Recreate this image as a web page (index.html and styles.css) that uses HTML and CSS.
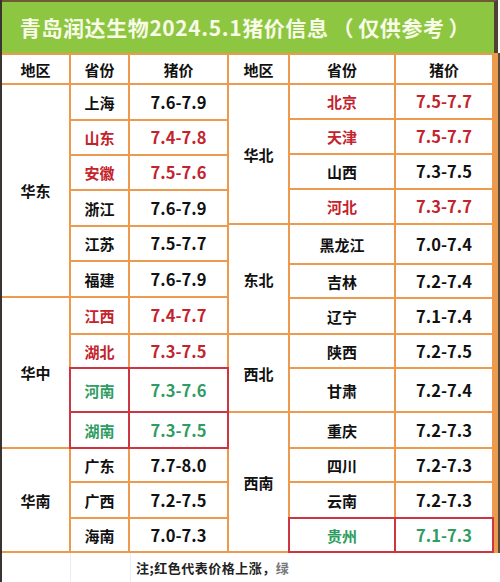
FILE: index.html
```html
<!DOCTYPE html>
<html lang="zh">
<head>
<meta charset="utf-8">
<title>青岛润达生物猪价信息</title>
<link rel="stylesheet" href="styles.css">
</head>
<body>
<div class="frame">
  <div class="title">青岛润达生物2024.5.1猪价信息<span class="paren">（</span>仅供参考<span class="paren">）</span></div>
  <div class="table">
    <div class="half left">
      <div class="c hd">地区</div><div class="c hd">省份</div><div class="c hd">猪价</div>
      <div class="c reg r-hd">华东</div>
      <div class="c">上海</div><div class="c num">7.6-7.9</div>
      <div class="c red">山东</div><div class="c num red">7.4-7.8</div>
      <div class="c red">安徽</div><div class="c num red">7.5-7.6</div>
      <div class="c">浙江</div><div class="c num">7.6-7.9</div>
      <div class="c">江苏</div><div class="c num">7.5-7.7</div>
      <div class="c">福建</div><div class="c num">7.6-7.9</div>
      <div class="c reg r-hz">华中</div>
      <div class="c red">江西</div><div class="c num red">7.4-7.7</div>
      <div class="c red">湖北</div><div class="c num red">7.3-7.5</div>
      <div class="c green hl">河南</div><div class="c num green hl">7.3-7.6</div>
      <div class="c green hl">湖南</div><div class="c num green hl">7.3-7.5</div>
      <div class="c reg r-hn">华南</div>
      <div class="c">广东</div><div class="c num">7.7-8.0</div>
      <div class="c">广西</div><div class="c num">7.2-7.5</div>
      <div class="c">海南</div><div class="c num">7.0-7.3</div>
    </div>
    <div class="half right">
      <div class="c hd">地区</div><div class="c hd">省份</div><div class="c hd">猪价</div>
      <div class="c reg r-hb">华北</div>
      <div class="c red">北京</div><div class="c num red">7.5-7.7</div>
      <div class="c red">天津</div><div class="c num red">7.5-7.7</div>
      <div class="c">山西</div><div class="c num">7.3-7.5</div>
      <div class="c red">河北</div><div class="c num red">7.3-7.7</div>
      <div class="c reg r-db">东北</div>
      <div class="c">黑龙江</div><div class="c num">7.0-7.4</div>
      <div class="c">吉林</div><div class="c num">7.2-7.4</div>
      <div class="c">辽宁</div><div class="c num">7.1-7.4</div>
      <div class="c reg r-xb">西北</div>
      <div class="c">陕西</div><div class="c num">7.2-7.5</div>
      <div class="c">甘肃</div><div class="c num">7.2-7.4</div>
      <div class="c reg r-xn">西南</div>
      <div class="c">重庆</div><div class="c num">7.2-7.3</div>
      <div class="c">四川</div><div class="c num">7.2-7.3</div>
      <div class="c">云南</div><div class="c num">7.2-7.3</div>
      <div class="c green hl">贵州</div><div class="c num green hl">7.1-7.3</div>
    </div>
  </div>
  <div class="note">
    <div class="n-cell n1"></div>
    <div class="n-cell n2"></div>
    <div class="n-text">注;红色代表价格上涨，<span class="blur">绿</span></div>
  </div>
</div>
</body>
</html>
```
FILE: styles.css
```css
html, body {
  margin: 0;
  padding: 0;
  background: #ffffff;
}
.frame {
  width: 498px;
  height: 582px;
  border-left: 2px solid #3a3430;
  overflow: hidden;
  font-family: "Noto Sans CJK SC", "Noto Sans", sans-serif;
  font-weight: 700;
  color: #111111;
}
.title {
  height: 51px;
  border-top: 2px solid #6e5a34;
  margin-right: 2px;
  border-right: 4px solid #4e4232;
  background: #8dc641;
  color: #f8fbe6;
  font-size: 21px;
  line-height: 51px;
  text-align: center;
  letter-spacing: 0.6px;
  padding-right: 2px;
}
.paren {
  margin: 0 4px;
}
.table {
  display: flex;
  gap: 2px;
  background: #ec9a4e;
  padding: 2px 2px 2px 0;
  width: 494px;
  border-right: 2px solid #5a4a38;
}
.half {
  display: grid;
  column-gap: 2px;
  row-gap: 2px;
}
.left {
  grid-template-columns: 67px 57px 97px;
  grid-template-rows: 28px 34px 33px 33px 34px 33px 34px 35px 32px 42px 34px 32px 34px 32px;
}
.right {
  grid-template-columns: 59px 104px 96px;
  grid-template-rows: 28px 33px 33px 33px 33px 38px 32px 34px 32px 42px 34px 32px 34px 32px;
}
.c {
  background: #ffffff;
  display: flex;
  align-items: center;
  justify-content: center;
  font-size: 15px;
  line-height: 1;
}
.hd { font-size: 15px; }
.num { font-size: 16.5px; }
.reg { grid-column: 1; }
.left .r-hd { grid-row: 2 / 8; }
.left .r-hz { grid-row: 8 / 12; }
.left .r-hn { grid-row: 12 / 15; }
.right .r-hb { grid-row: 2 / 6; }
.right .r-db { grid-row: 6 / 9; }
.right .r-xb { grid-row: 9 / 11; }
.right .r-xn { grid-row: 11 / 15; }
.red { color: #c3232c; }
.green { color: #2f9c62; }
.hl { outline: 2px solid #cc3640; }
.note {
  display: flex;
  height: 29px;
}
.n-cell {
  border-right: 1px solid #ececec;
}
.n1 { width: 68px; }
.n2 { width: 59px; }
.n-text {
  padding-left: 5px;
  font-family: "Noto Sans CJK SC", sans-serif;
  font-weight: 700;
  font-size: 13px;
  line-height: 29px;
  color: #222222;
  letter-spacing: 0.5px;
}
.blur { color: #777777; }
```
